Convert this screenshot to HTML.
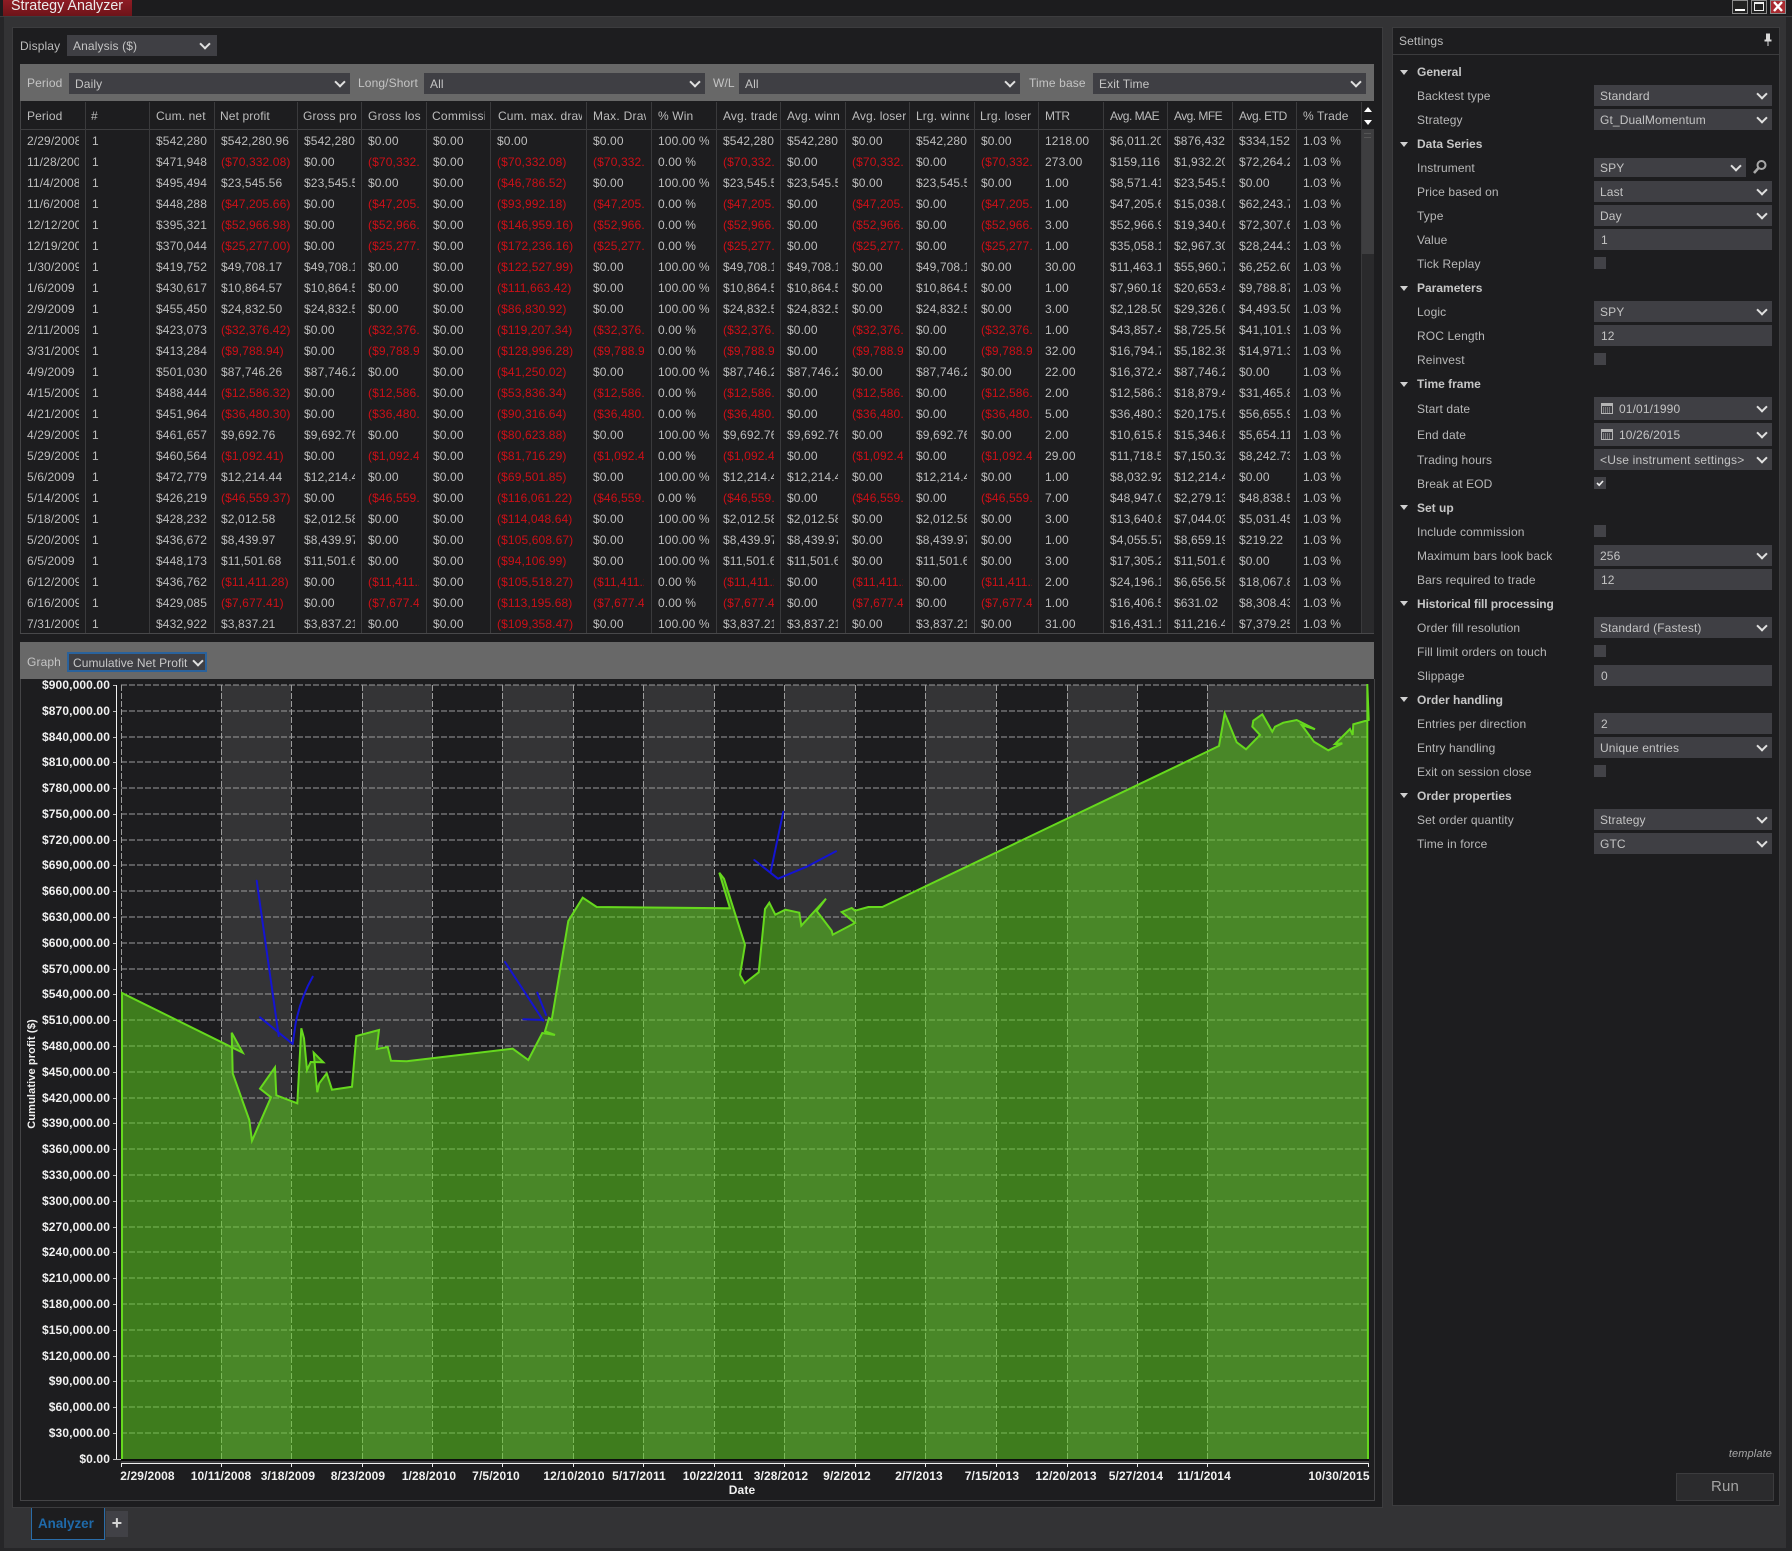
<!DOCTYPE html>
<html><head><meta charset="utf-8"><title>Strategy Analyzer</title>
<style>
*{box-sizing:border-box}
html,body{margin:0;padding:0}
body{width:1792px;height:1551px;overflow:hidden;background:#333335;position:relative;font:12px/16px "Liberation Sans",Arial,sans-serif;color:#bcbcbc;letter-spacing:.12px}
div{position:absolute}
.l{white-space:nowrap}
.s{background:#3f3f44;color:#c4c4c4;padding-left:6px;padding-top:1px;white-space:nowrap}
.s.d::after{content:"";position:absolute;right:6px;top:50%;width:6px;height:6px;margin-top:-5.5px;border-right:2px solid #e0e0e0;border-bottom:2px solid #e0e0e0;transform:rotate(45deg)}
#ds::after{right:8px}
#gs::after{right:3px}
.c{top:131px;line-height:21px;overflow:hidden;white-space:nowrap;color:#bebebe;height:502px}
.c b{font-weight:400;color:#cc1018}
.h{top:108px;height:16px;overflow:hidden;white-space:nowrap;color:#bcbcbc}
.sep{top:102px;width:1px;height:531px;background:#3a3a3c}
.g{left:1417px;font-weight:700;color:#c6c6c6;white-space:nowrap;letter-spacing:0}
.t{left:1400px;width:0;height:0;border-left:4.5px solid transparent;border-right:4.5px solid transparent;border-top:5px solid #d0d0d0}
.n{left:1417px;white-space:nowrap;color:#b8b8b8}
.v{left:1594px;width:178px;height:21px;line-height:21px}
.k{left:1594px;width:12px;height:12px;background:#424247}
svg text{font-family:"Liberation Sans",Arial,sans-serif;font-weight:700;font-size:12px;fill:#f0f0f0}
</style></head><body>

<!-- title bar -->
<div style="left:0;top:0;width:1792px;height:17px;background:#1c1c1e;border-bottom:1px solid #3c3c3e"></div>
<div style="left:3px;top:0;width:129px;height:16px;background:linear-gradient(#8e1c24,#6e1419)"></div>
<div class="l" style="left:11px;top:-2px;font-size:14.3px;line-height:16px;color:#ececec;letter-spacing:0">Strategy Analyzer</div>
<div style="left:1732px;top:0;width:16px;height:14px;border:1px solid #8a8a8a;background:#222"><div style="left:2px;top:8px;width:10px;height:2px;background:#fff"></div></div>
<div style="left:1751px;top:0;width:16px;height:14px;border:1px solid #8a8a8a;background:#222"><div style="left:2px;top:1px;width:10px;height:9px;border:1px solid #eee;border-top-width:2px"></div></div>
<div style="left:1770px;top:0;width:16px;height:14px;background:#a82a30;border:1px solid #8a8a8a"><svg width="14" height="12" style="position:absolute;left:0;top:0"><path d="M3 1L11 10M11 1L3 10" stroke="#fff" stroke-width="2.4" fill="none"/></svg></div>
<div style="left:0;top:17px;width:4px;height:1534px;background:#262628"></div>
<div style="left:1786px;top:17px;width:6px;height:1534px;background:#262628"></div>
<div style="left:0;top:1548px;width:1792px;height:3px;background:#262628"></div>

<!-- left panel -->
<div style="left:12px;top:27px;width:1371px;height:1481px;background:#1d1d1f;border:1px solid #3c3c3e"></div>
<div class="l" style="left:20px;top:38px">Display</div>
<div class="s d" id="ds" style="left:67px;top:35px;width:150px;height:21px;line-height:21px">Analysis ($)</div>

<!-- filter bar -->
<div style="left:20px;top:64px;width:1354px;height:37px;background:#686868"></div>
<div class="l" style="left:27px;top:75px;color:#c4c4c4">Period</div>
<div class="s d" style="left:69px;top:73px;width:281px;height:21px;line-height:21px">Daily</div>
<div class="l" style="left:358px;top:75px;color:#c4c4c4">Long/Short</div>
<div class="s d" style="left:424px;top:73px;width:281px;height:21px;line-height:21px">All</div>
<div class="l" style="left:713px;top:75px;color:#c4c4c4">W/L</div>
<div class="s d" style="left:739px;top:73px;width:281px;height:21px;line-height:21px">All</div>
<div class="l" style="left:1029px;top:75px;color:#c4c4c4">Time base</div>
<div class="s d" style="left:1093px;top:73px;width:273px;height:21px;line-height:21px">Exit Time</div>

<!-- table frame -->
<div style="left:20px;top:101px;width:1px;height:532px;background:#444446"></div>
<div style="left:20px;top:129px;width:1354px;height:1px;background:#3e3e40"></div>
<div style="left:20px;top:633px;width:1354px;height:1px;background:#48484a"></div>
<div style="left:1361px;top:130px;width:13px;height:503px;background:#2a2a2c"></div>
<div style="left:1361px;top:130px;width:13px;height:124px;background:#3e3e40"></div>
<div style="left:1364px;top:133px;width:7px;height:5px;border-top:1px solid #555;border-bottom:1px solid #555"></div>
<div style="left:1364px;top:107px;width:0;height:0;border-left:4px solid transparent;border-right:4px solid transparent;border-bottom:5px solid #fff"></div>
<div style="left:1364px;top:120px;width:0;height:0;border-left:4px solid transparent;border-right:4px solid transparent;border-top:5px solid #fff"></div>

<div class="sep" style="left:85px"></div><div class="sep" style="left:149px"></div><div class="sep" style="left:214px"></div><div class="sep" style="left:297px"></div><div class="sep" style="left:361px"></div><div class="sep" style="left:426px"></div><div class="sep" style="left:490px"></div><div class="sep" style="left:586px"></div><div class="sep" style="left:651px"></div><div class="sep" style="left:716px"></div><div class="sep" style="left:780px"></div><div class="sep" style="left:845px"></div><div class="sep" style="left:909px"></div><div class="sep" style="left:974px"></div><div class="sep" style="left:1038px"></div><div class="sep" style="left:1103px"></div><div class="sep" style="left:1167px"></div><div class="sep" style="left:1232px"></div><div class="sep" style="left:1296px"></div><div class="sep" style="left:1361px"></div>

<!-- headers -->
<div class="h" style="left:27px;width:54px">Period</div>
<div class="h" style="left:91px;width:50px">#</div>
<div class="h" style="left:156px;width:54px">Cum. net</div>
<div class="h" style="left:220px;width:72px">Net profit</div>
<div class="h" style="left:303px;width:54px">Gross profit</div>
<div class="h" style="left:368px;width:53px;letter-spacing:.25px">Gross loss</div>
<div class="h" style="left:432px;width:53px;letter-spacing:.25px">Commission</div>
<div class="h" style="left:498px;width:84px">Cum. max. drawdown</div>
<div class="h" style="left:593px;width:53px;letter-spacing:.25px">Max. Drawdown</div>
<div class="h" style="left:658px;width:54px">% Win</div>
<div class="h" style="left:723px;width:54px">Avg. trade</div>
<div class="h" style="left:787px;width:53px">Avg. winner</div>
<div class="h" style="left:852px;width:54px">Avg. loser</div>
<div class="h" style="left:916px;width:53px">Lrg. winner</div>
<div class="h" style="left:980px;width:54px">Lrg. loser</div>
<div class="h" style="left:1045px;width:54px;letter-spacing:-.5px">MTR</div>
<div class="h" style="left:1110px;width:54px;letter-spacing:-.5px">Avg. MAE</div>
<div class="h" style="left:1174px;width:54px;letter-spacing:-.55px">Avg. MFE</div>
<div class="h" style="left:1239px;width:54px;letter-spacing:-.4px">Avg. ETD</div>
<div class="h" style="left:1303px;width:54px">% Trade</div>

<!-- columns -->
<div class="c" style="left:27px;width:52px">2/29/2008<br>11/28/2008<br>11/4/2008<br>11/6/2008<br>12/12/2008<br>12/19/2008<br>1/30/2009<br>1/6/2009<br>2/9/2009<br>2/11/2009<br>3/31/2009<br>4/9/2009<br>4/15/2009<br>4/21/2009<br>4/29/2009<br>5/29/2009<br>5/6/2009<br>5/14/2009<br>5/18/2009<br>5/20/2009<br>6/5/2009<br>6/12/2009<br>6/16/2009<br>7/31/2009</div>
<div class="c" style="left:92px;width:50px">1<br>1<br>1<br>1<br>1<br>1<br>1<br>1<br>1<br>1<br>1<br>1<br>1<br>1<br>1<br>1<br>1<br>1<br>1<br>1<br>1<br>1<br>1<br>1</div>
<div class="c" style="left:156px;width:52px">$542,280<br>$471,948<br>$495,494<br>$448,288<br>$395,321<br>$370,044<br>$419,752<br>$430,617<br>$455,450<br>$423,073<br>$413,284<br>$501,030<br>$488,444<br>$451,964<br>$461,657<br>$460,564<br>$472,779<br>$426,219<br>$428,232<br>$436,672<br>$448,173<br>$436,762<br>$429,085<br>$432,922</div>
<div class="c" style="left:221px;width:72px">$542,280.96<br><b>($70,332.08)</b><br>$23,545.56<br><b>($47,205.66)</b><br><b>($52,966.98)</b><br><b>($25,277.00)</b><br>$49,708.17<br>$10,864.57<br>$24,832.50<br><b>($32,376.42)</b><br><b>($9,788.94)</b><br>$87,746.26<br><b>($12,586.32)</b><br><b>($36,480.30)</b><br>$9,692.76<br><b>($1,092.41)</b><br>$12,214.44<br><b>($46,559.37)</b><br>$2,012.58<br>$8,439.97<br>$11,501.68<br><b>($11,411.28)</b><br><b>($7,677.41)</b><br>$3,837.21</div>
<div class="c" style="left:304px;width:50.5px">$542,280.96<br>$0.00<br>$23,545.56<br>$0.00<br>$0.00<br>$0.00<br>$49,708.17<br>$10,864.57<br>$24,832.50<br>$0.00<br>$0.00<br>$87,746.26<br>$0.00<br>$0.00<br>$9,692.76<br>$0.00<br>$12,214.44<br>$0.00<br>$2,012.58<br>$8,439.97<br>$11,501.68<br>$0.00<br>$0.00<br>$3,837.21</div>
<div class="c" style="left:368px;width:51px">$0.00<br><b>($70,332.08)</b><br>$0.00<br><b>($47,205.66)</b><br><b>($52,966.98)</b><br><b>($25,277.00)</b><br>$0.00<br>$0.00<br>$0.00<br><b>($32,376.42)</b><br><b>($9,788.94)</b><br>$0.00<br><b>($12,586.32)</b><br><b>($36,480.30)</b><br>$0.00<br><b>($1,092.41)</b><br>$0.00<br><b>($46,559.37)</b><br>$0.00<br>$0.00<br>$0.00<br><b>($11,411.28)</b><br><b>($7,677.41)</b><br>$0.00</div>
<div class="c" style="left:433px;width:52px">$0.00<br>$0.00<br>$0.00<br>$0.00<br>$0.00<br>$0.00<br>$0.00<br>$0.00<br>$0.00<br>$0.00<br>$0.00<br>$0.00<br>$0.00<br>$0.00<br>$0.00<br>$0.00<br>$0.00<br>$0.00<br>$0.00<br>$0.00<br>$0.00<br>$0.00<br>$0.00<br>$0.00</div>
<div class="c" style="left:497px;width:84px">$0.00<br><b>($70,332.08)</b><br><b>($46,786.52)</b><br><b>($93,992.18)</b><br><b>($146,959.16)</b><br><b>($172,236.16)</b><br><b>($122,527.99)</b><br><b>($111,663.42)</b><br><b>($86,830.92)</b><br><b>($119,207.34)</b><br><b>($128,996.28)</b><br><b>($41,250.02)</b><br><b>($53,836.34)</b><br><b>($90,316.64)</b><br><b>($80,623.88)</b><br><b>($81,716.29)</b><br><b>($69,501.85)</b><br><b>($116,061.22)</b><br><b>($114,048.64)</b><br><b>($105,608.67)</b><br><b>($94,106.99)</b><br><b>($105,518.27)</b><br><b>($113,195.68)</b><br><b>($109,358.47)</b></div>
<div class="c" style="left:593px;width:51px">$0.00<br><b>($70,332.08)</b><br>$0.00<br><b>($47,205.66)</b><br><b>($52,966.98)</b><br><b>($25,277.00)</b><br>$0.00<br>$0.00<br>$0.00<br><b>($32,376.42)</b><br><b>($9,788.94)</b><br>$0.00<br><b>($12,586.32)</b><br><b>($36,480.30)</b><br>$0.00<br><b>($1,092.41)</b><br>$0.00<br><b>($46,559.37)</b><br>$0.00<br>$0.00<br>$0.00<br><b>($11,411.28)</b><br><b>($7,677.41)</b><br>$0.00</div>
<div class="c" style="left:658px;width:60px">100.00 %<br>0.00 %<br>100.00 %<br>0.00 %<br>0.00 %<br>0.00 %<br>100.00 %<br>100.00 %<br>100.00 %<br>0.00 %<br>0.00 %<br>100.00 %<br>0.00 %<br>0.00 %<br>100.00 %<br>0.00 %<br>100.00 %<br>0.00 %<br>100.00 %<br>100.00 %<br>100.00 %<br>0.00 %<br>0.00 %<br>100.00 %</div>
<div class="c" style="left:723px;width:50.5px">$542,280.96<br><b>($70,332.08)</b><br>$23,545.56<br><b>($47,205.66)</b><br><b>($52,966.98)</b><br><b>($25,277.00)</b><br>$49,708.17<br>$10,864.57<br>$24,832.50<br><b>($32,376.42)</b><br><b>($9,788.94)</b><br>$87,746.26<br><b>($12,586.32)</b><br><b>($36,480.30)</b><br>$9,692.76<br><b>($1,092.41)</b><br>$12,214.44<br><b>($46,559.37)</b><br>$2,012.58<br>$8,439.97<br>$11,501.68<br><b>($11,411.28)</b><br><b>($7,677.41)</b><br>$3,837.21</div>
<div class="c" style="left:787px;width:50.5px">$542,280.96<br>$0.00<br>$23,545.56<br>$0.00<br>$0.00<br>$0.00<br>$49,708.17<br>$10,864.57<br>$24,832.50<br>$0.00<br>$0.00<br>$87,746.26<br>$0.00<br>$0.00<br>$9,692.76<br>$0.00<br>$12,214.44<br>$0.00<br>$2,012.58<br>$8,439.97<br>$11,501.68<br>$0.00<br>$0.00<br>$3,837.21</div>
<div class="c" style="left:852px;width:51px">$0.00<br><b>($70,332.08)</b><br>$0.00<br><b>($47,205.66)</b><br><b>($52,966.98)</b><br><b>($25,277.00)</b><br>$0.00<br>$0.00<br>$0.00<br><b>($32,376.42)</b><br><b>($9,788.94)</b><br>$0.00<br><b>($12,586.32)</b><br><b>($36,480.30)</b><br>$0.00<br><b>($1,092.41)</b><br>$0.00<br><b>($46,559.37)</b><br>$0.00<br>$0.00<br>$0.00<br><b>($11,411.28)</b><br><b>($7,677.41)</b><br>$0.00</div>
<div class="c" style="left:916px;width:50.5px">$542,280.96<br>$0.00<br>$23,545.56<br>$0.00<br>$0.00<br>$0.00<br>$49,708.17<br>$10,864.57<br>$24,832.50<br>$0.00<br>$0.00<br>$87,746.26<br>$0.00<br>$0.00<br>$9,692.76<br>$0.00<br>$12,214.44<br>$0.00<br>$2,012.58<br>$8,439.97<br>$11,501.68<br>$0.00<br>$0.00<br>$3,837.21</div>
<div class="c" style="left:981px;width:51px">$0.00<br><b>($70,332.08)</b><br>$0.00<br><b>($47,205.66)</b><br><b>($52,966.98)</b><br><b>($25,277.00)</b><br>$0.00<br>$0.00<br>$0.00<br><b>($32,376.42)</b><br><b>($9,788.94)</b><br>$0.00<br><b>($12,586.32)</b><br><b>($36,480.30)</b><br>$0.00<br><b>($1,092.41)</b><br>$0.00<br><b>($46,559.37)</b><br>$0.00<br>$0.00<br>$0.00<br><b>($11,411.28)</b><br><b>($7,677.41)</b><br>$0.00</div>
<div class="c" style="left:1045px;width:52px">1218.00<br>273.00<br>1.00<br>1.00<br>3.00<br>1.00<br>30.00<br>1.00<br>3.00<br>1.00<br>32.00<br>22.00<br>2.00<br>5.00<br>2.00<br>29.00<br>1.00<br>7.00<br>3.00<br>1.00<br>3.00<br>2.00<br>1.00<br>31.00</div>
<div class="c" style="left:1110px;width:50.5px">$6,011.20<br>$159,116<br>$8,571.41<br>$47,205.66<br>$52,966.98<br>$35,058.12<br>$11,463.12<br>$7,960.18<br>$2,128.50<br>$43,857.42<br>$16,794.72<br>$16,372.42<br>$12,586.32<br>$36,480.30<br>$10,615.82<br>$11,718.52<br>$8,032.92<br>$48,947.02<br>$13,640.82<br>$4,055.57<br>$17,305.22<br>$24,196.12<br>$16,406.52<br>$16,431.12</div>
<div class="c" style="left:1174px;width:50.5px">$876,432<br>$1,932.20<br>$23,545.56<br>$15,038.02<br>$19,340.62<br>$2,967.30<br>$55,960.72<br>$20,653.42<br>$29,326.02<br>$8,725.56<br>$5,182.38<br>$87,746.26<br>$18,879.42<br>$20,175.62<br>$15,346.82<br>$7,150.32<br>$12,214.44<br>$2,279.13<br>$7,044.03<br>$8,659.19<br>$11,501.68<br>$6,656.58<br>$631.02<br>$11,216.42</div>
<div class="c" style="left:1239px;width:50.5px">$334,152<br>$72,264.28<br>$0.00<br>$62,243.72<br>$72,307.62<br>$28,244.32<br>$6,252.60<br>$9,788.87<br>$4,493.50<br>$41,101.92<br>$14,971.32<br>$0.00<br>$31,465.82<br>$56,655.92<br>$5,654.11<br>$8,242.73<br>$0.00<br>$48,838.52<br>$5,031.45<br>$219.22<br>$0.00<br>$18,067.82<br>$8,308.43<br>$7,379.25</div>
<div class="c" style="left:1303px;width:52px">1.03 %<br>1.03 %<br>1.03 %<br>1.03 %<br>1.03 %<br>1.03 %<br>1.03 %<br>1.03 %<br>1.03 %<br>1.03 %<br>1.03 %<br>1.03 %<br>1.03 %<br>1.03 %<br>1.03 %<br>1.03 %<br>1.03 %<br>1.03 %<br>1.03 %<br>1.03 %<br>1.03 %<br>1.03 %<br>1.03 %<br>1.03 %</div>

<!-- graph bar -->
<div style="left:20px;top:642px;width:1354px;height:37px;background:#686868"></div>
<div class="l" style="left:27px;top:654px;color:#c4c4c4">Graph</div>
<div class="s d" id="gs" style="left:67px;top:652px;width:140px;height:20px;line-height:16px;border:2px solid #2a629c;padding-left:4px;color:#c8c8c8;letter-spacing:.05px">Cumulative Net Profit</div>

<!-- chart frame -->
<div style="left:20px;top:679px;width:1355px;height:822px;border:1px solid #444446;border-top:0"></div>

<!-- chart -->
<svg width="1792" height="1551" style="position:absolute;left:0;top:0" xmlns="http://www.w3.org/2000/svg">
<g shape-rendering="crispEdges">
<rect x="221" y="685" width="70" height="774" fill="#343436"/>
<rect x="362" y="685" width="70" height="774" fill="#343436"/>
<rect x="502" y="685" width="71" height="774" fill="#343436"/>
<rect x="643" y="685" width="71" height="774" fill="#343436"/>
<rect x="784" y="685" width="71" height="774" fill="#343436"/>
<rect x="925" y="685" width="71" height="774" fill="#343436"/>
<rect x="1067" y="685" width="70" height="774" fill="#343436"/>
<rect x="1207" y="685" width="161" height="774" fill="#343436"/>
<path d="M121 685H1368M121 711H1368M121 737H1368M121 762H1368M121 788H1368M121 814H1368M121 840H1368M121 865H1368M121 891H1368M121 917H1368M121 943H1368M121 969H1368M121 994H1368M121 1020H1368M121 1046H1368M121 1072H1368M121 1098H1368M121 1123H1368M121 1149H1368M121 1175H1368M121 1201H1368M121 1227H1368M121 1252H1368M121 1278H1368M121 1304H1368M121 1330H1368M121 1356H1368M121 1381H1368M121 1407H1368M121 1433H1368" stroke="#9c9c9c" stroke-width="1" stroke-dasharray="6 2" fill="none"/>
<path d="M121.5 685V1459M221.5 685V1459M291.5 685V1459M362.5 685V1459M432.5 685V1459M502.5 685V1459M573.5 685V1459M643.5 685V1459M714.5 685V1459M784.5 685V1459M855.5 685V1459M925.5 685V1459M996.5 685V1459M1067.5 685V1459M1137.5 685V1459M1207.5 685V1459" stroke="#9c9c9c" stroke-width="1" stroke-dasharray="6 2" fill="none"/>
</g>
<polygon fill="#5ed41d" fill-opacity=".52" points="121,993 242.7,1052.7 231.7,1032.7 232.7,1073.3 249.3,1120 252,1140.7 271,1097.3 260,1088.7 275,1067.3 276.3,1095.3 297.3,1103.3 301.3,1028.3 304,1038.3 307,1070 310.7,1062 323.3,1062.3 313.7,1052.7 317.3,1092.3 319.3,1083.3 326.7,1073.3 332,1089.7 352,1086.7 356.3,1036 379,1030 376.7,1049 387.7,1047 391,1060.7 406.7,1061.3 512.7,1048.7 528.3,1060 542.3,1033 555,1035 545,1031.3 549,1018 551.7,1020 568.3,921 582.7,897.7 596.7,907 730,908.3 719.3,872.7 724,878.7 745,945 740,975 744.7,983.3 758.7,972.3 765,909 769.3,902.7 775.3,914.7 785.3,909.7 799.3,912.7 801.3,925.7 826,898.7 816.7,911 831.7,930.7 832.7,934.7 855,923 841.7,912 851.7,908 855,910.7 868.3,907 882.3,907 1219,746 1224.7,713.3 1236.7,742.3 1246,749.3 1260,735 1252.3,726.7 1253.3,720.7 1262.3,714.3 1272.3,731.7 1275,726.7 1283.3,722.7 1296.7,720 1315,729.3 1301.7,725 1314,741.7 1328.3,750.3 1342.3,743.3 1335,744 1350,729 1352.7,735 1353.3,724.3 1368.7,720 1367.3,684 1368,1459 121,1459"/>
<polyline fill="none" stroke="#66d91e" stroke-width="2" stroke-linejoin="miter" points="122,1459 122,993 242.7,1052.7 231.7,1032.7 232.7,1073.3 249.3,1120 252,1140.7 271,1097.3 260,1088.7 275,1067.3 276.3,1095.3 297.3,1103.3 301.3,1028.3 304,1038.3 307,1070 310.7,1062 323.3,1062.3 313.7,1052.7 317.3,1092.3 319.3,1083.3 326.7,1073.3 332,1089.7 352,1086.7 356.3,1036 379,1030 376.7,1049 387.7,1047 391,1060.7 406.7,1061.3 512.7,1048.7 528.3,1060 542.3,1033 555,1035 545,1031.3 549,1018 551.7,1020 568.3,921 582.7,897.7 596.7,907 730,908.3 719.3,872.7 724,878.7 745,945 740,975 744.7,983.3 758.7,972.3 765,909 769.3,902.7 775.3,914.7 785.3,909.7 799.3,912.7 801.3,925.7 826,898.7 816.7,911 831.7,930.7 832.7,934.7 855,923 841.7,912 851.7,908 855,910.7 868.3,907 882.3,907 1219,746 1224.7,713.3 1236.7,742.3 1246,749.3 1260,735 1252.3,726.7 1253.3,720.7 1262.3,714.3 1272.3,731.7 1275,726.7 1283.3,722.7 1296.7,720 1315,729.3 1301.7,725 1314,741.7 1328.3,750.3 1342.3,743.3 1335,744 1350,729 1352.7,735 1353.3,724.3 1368.7,720 1367.3,684 1368,1459"/>
<g fill="none" stroke="#1414d2" stroke-width="2" stroke-linecap="round" stroke-linejoin="round">
<path d="M256.7 880.7L278.7 1036M260 1017.3L292.7 1044M312.7 976.7Q301 997 295.7 1023L292.7 1044"/>
<path d="M505 962L543.3 1020.7M523.3 1019.3L543.3 1020M537.3 992.7L546 1015"/>
<path d="M783.3 811.7L770.7 871.7M754.3 860L778 878.7L806.7 866.7L836 851.3"/>
</g>
<g shape-rendering="crispEdges">
<rect x="121" y="1459" width="1248" height="2" fill="#0c0c0c"/>
<rect x="121" y="1461" width="1248" height="2" fill="#3a3a3c"/>
<path d="M116.5 685V1460M121 1463.5H1369" stroke="#f0f0f0" stroke-width="1" fill="none"/>
<path d="M113 685.5H116M113 711.5H116M113 737.5H116M113 762.5H116M113 788.5H116M113 814.5H116M113 840.5H116M113 865.5H116M113 891.5H116M113 917.5H116M113 943.5H116M113 969.5H116M113 994.5H116M113 1020.5H116M113 1046.5H116M113 1072.5H116M113 1098.5H116M113 1123.5H116M113 1149.5H116M113 1175.5H116M113 1201.5H116M113 1227.5H116M113 1252.5H116M113 1278.5H116M113 1304.5H116M113 1330.5H116M113 1356.5H116M113 1381.5H116M113 1407.5H116M113 1433.5H116M113 1459.5H121" stroke="#bbb" fill="none"/>
<path d="M121.5 1463V1467M221.5 1463V1467M291.5 1463V1467M362.5 1463V1467M432.5 1463V1467M502.5 1463V1467M573.5 1463V1467M643.5 1463V1467M714.5 1463V1467M784.5 1463V1467M855.5 1463V1467M925.5 1463V1467M996.5 1463V1467M1067.5 1463V1467M1137.5 1463V1467M1207.5 1463V1467M1368.5 1463V1467" stroke="#eee" fill="none"/>
</g>
<g text-anchor="end">
<text x="110" y="689">$900,000.00</text><text x="110" y="715">$870,000.00</text><text x="110" y="741">$840,000.00</text><text x="110" y="766">$810,000.00</text><text x="110" y="792">$780,000.00</text><text x="110" y="818">$750,000.00</text><text x="110" y="844">$720,000.00</text><text x="110" y="869">$690,000.00</text><text x="110" y="895">$660,000.00</text><text x="110" y="921">$630,000.00</text><text x="110" y="947">$600,000.00</text><text x="110" y="973">$570,000.00</text><text x="110" y="998">$540,000.00</text><text x="110" y="1024">$510,000.00</text><text x="110" y="1050">$480,000.00</text><text x="110" y="1076">$450,000.00</text><text x="110" y="1102">$420,000.00</text><text x="110" y="1127">$390,000.00</text><text x="110" y="1153">$360,000.00</text><text x="110" y="1179">$330,000.00</text><text x="110" y="1205">$300,000.00</text><text x="110" y="1231">$270,000.00</text><text x="110" y="1256">$240,000.00</text><text x="110" y="1282">$210,000.00</text><text x="110" y="1308">$180,000.00</text><text x="110" y="1334">$150,000.00</text><text x="110" y="1360">$120,000.00</text><text x="110" y="1385">$90,000.00</text><text x="110" y="1411">$60,000.00</text><text x="110" y="1437">$30,000.00</text><text x="110" y="1463">$0.00</text>
</g>
<g text-anchor="middle">
<text x="147.5" y="1480">2/29/2008</text><text x="221" y="1480">10/11/2008</text><text x="288" y="1480">3/18/2009</text><text x="358" y="1480">8/23/2009</text><text x="429" y="1480">1/28/2010</text><text x="496" y="1480">7/5/2010</text><text x="574" y="1480">12/10/2010</text><text x="639" y="1480">5/17/2011</text><text x="713" y="1480">10/22/2011</text><text x="781" y="1480">3/28/2012</text><text x="847" y="1480">9/2/2012</text><text x="919" y="1480">2/7/2013</text><text x="992" y="1480">7/15/2013</text><text x="1066" y="1480">12/20/2013</text><text x="1136" y="1480">5/27/2014</text><text x="1204" y="1480">11/1/2014</text><text x="1339" y="1480">10/30/2015</text>
<text x="742" y="1494">Date</text>
<text transform="translate(35 1074) rotate(-90)" style="font-size:11px">Cumulative profit ($)</text>
</g>
</svg>

<!-- settings panel -->
<div style="left:1392px;top:27px;width:388px;height:1479px;background:#1d1d1f;border:1px solid #3c3c3e"></div>
<div style="left:1393px;top:54px;width:386px;height:1px;background:#3c3c3e"></div>
<div class="l" style="left:1399px;top:33px;color:#bcbcbc">Settings</div>
<svg width="8" height="13" style="position:absolute;left:1764px;top:33px"><path d="M2.5 1H5.5V7H7V8H1V7H2.5ZM4 8V13" fill="#d8d8d8" stroke="#d8d8d8" stroke-width="1"/></svg>

<div class="t" style="top:70px"></div><div class="g" style="top:64px">General</div>
<div class="n" style="top:88px">Backtest type</div><div class="s d v" style="top:85px">Standard</div>
<div class="n" style="top:112px">Strategy</div><div class="s d v" style="top:109px">Gt_DualMomentum</div>
<div class="t" style="top:142px"></div><div class="g" style="top:136px">Data Series</div>
<div class="n" style="top:160px">Instrument</div><div class="s d" style="left:1594px;top:158px;width:152px;height:19px;line-height:18px">SPY</div>
<svg width="16" height="16" style="position:absolute;left:1752px;top:159px"><circle cx="9.5" cy="6" r="4" fill="none" stroke="#a8a8a8" stroke-width="2"/><path d="M6.5 9L2 14" stroke="#a8a8a8" stroke-width="2.6"/></svg>
<div class="n" style="top:184px">Price based on</div><div class="s d v" style="top:181px">Last</div>
<div class="n" style="top:208px">Type</div><div class="s d v" style="top:205px">Day</div>
<div class="n" style="top:232px">Value</div><div class="s v" style="top:229px;padding-left:7px">1</div>
<div class="n" style="top:256px">Tick Replay</div><div class="k" style="top:257px"></div>
<div class="t" style="top:286px"></div><div class="g" style="top:280px">Parameters</div>
<div class="n" style="top:304px">Logic</div><div class="s d v" style="top:301px">SPY</div>
<div class="n" style="top:328px">ROC Length</div><div class="s v" style="top:325px;padding-left:7px">12</div>
<div class="n" style="top:352px">Reinvest</div><div class="k" style="top:353px"></div>
<div class="t" style="top:382px"></div><div class="g" style="top:376px">Time frame</div>
<div class="n" style="top:401px">Start date</div><div class="s d v" style="top:397px;height:23px;line-height:23px;padding-left:25px">01/01/1990</div>
<svg width="12" height="12" style="position:absolute;left:1601px;top:403px"><rect x="0" y="0" width="12" height="11" fill="#b4b4b4"/><rect x="1" y="3" width="10" height="7" fill="#3f3f44"/><path d="M2 5H10M2 7H10M2 9H10" stroke="#b4b4b4" stroke-dasharray="1 1"/></svg>
<div class="n" style="top:427px">End date</div><div class="s d v" style="top:423px;height:23px;line-height:23px;padding-left:25px">10/26/2015</div>
<svg width="12" height="12" style="position:absolute;left:1601px;top:429px"><rect x="0" y="0" width="12" height="11" fill="#b4b4b4"/><rect x="1" y="3" width="10" height="7" fill="#3f3f44"/><path d="M2 5H10M2 7H10M2 9H10" stroke="#b4b4b4" stroke-dasharray="1 1"/></svg>
<div class="n" style="top:452px">Trading hours</div><div class="s d v" style="top:449px;letter-spacing:.2px">&lt;Use instrument settings&gt;</div>
<div class="n" style="top:476px">Break at EOD</div><div class="k" style="top:477px"><svg width="12" height="12" style="position:absolute;left:0;top:0"><path d="M3 6L5.2 8.2L9 4" stroke="#eee" stroke-width="1.6" fill="none"/></svg></div>
<div class="t" style="top:505px"></div><div class="g" style="top:500px">Set up</div>
<div class="n" style="top:524px">Include commission</div><div class="k" style="top:525px"></div>
<div class="n" style="top:548px">Maximum bars look back</div><div class="s d v" style="top:545px">256</div>
<div class="n" style="top:572px">Bars required to trade</div><div class="s v" style="top:569px;padding-left:7px">12</div>
<div class="t" style="top:601px"></div><div class="g" style="top:596px;letter-spacing:-.1px">Historical fill processing</div>
<div class="n" style="top:620px">Order fill resolution</div><div class="s d v" style="top:617px">Standard (Fastest)</div>
<div class="n" style="top:644px">Fill limit orders on touch</div><div class="k" style="top:645px"></div>
<div class="n" style="top:668px">Slippage</div><div class="s v" style="top:665px;padding-left:7px">0</div>
<div class="t" style="top:697px"></div><div class="g" style="top:692px">Order handling</div>
<div class="n" style="top:716px">Entries per direction</div><div class="s v" style="top:713px;padding-left:7px">2</div>
<div class="n" style="top:740px">Entry handling</div><div class="s d v" style="top:737px">Unique entries</div>
<div class="n" style="top:764px">Exit on session close</div><div class="k" style="top:765px"></div>
<div class="t" style="top:793px"></div><div class="g" style="top:788px">Order properties</div>
<div class="n" style="top:812px">Set order quantity</div><div class="s d v" style="top:809px">Strategy</div>
<div class="n" style="top:836px">Time in force</div><div class="s d v" style="top:833px">GTC</div>

<div class="l" style="left:1700px;width:72px;top:1446px;text-align:right;font-size:11px;font-style:italic;color:#a8a8a8">template</div>
<div style="left:1676px;top:1473px;width:98px;height:28px;background:#2b2b2d;border:1px solid #3c3c3e;text-align:center;font-size:15px;line-height:26px;color:#a4a4a4">Run</div>

<!-- tabs -->
<div style="left:31px;top:1508px;width:74px;height:32px;background:#1d1d1f;border:1px solid #2a6ca8;border-top:0"></div>
<div class="l" style="left:38px;top:1516px;font-size:13.4px;font-weight:700;color:#1f6aaa;letter-spacing:0">Analyzer</div>
<div style="left:106px;top:1511px;width:22px;height:26px;background:#414146;text-align:center;color:#d4d4d4;font-size:18px;font-weight:700;line-height:25px">+</div>
</body></html>
